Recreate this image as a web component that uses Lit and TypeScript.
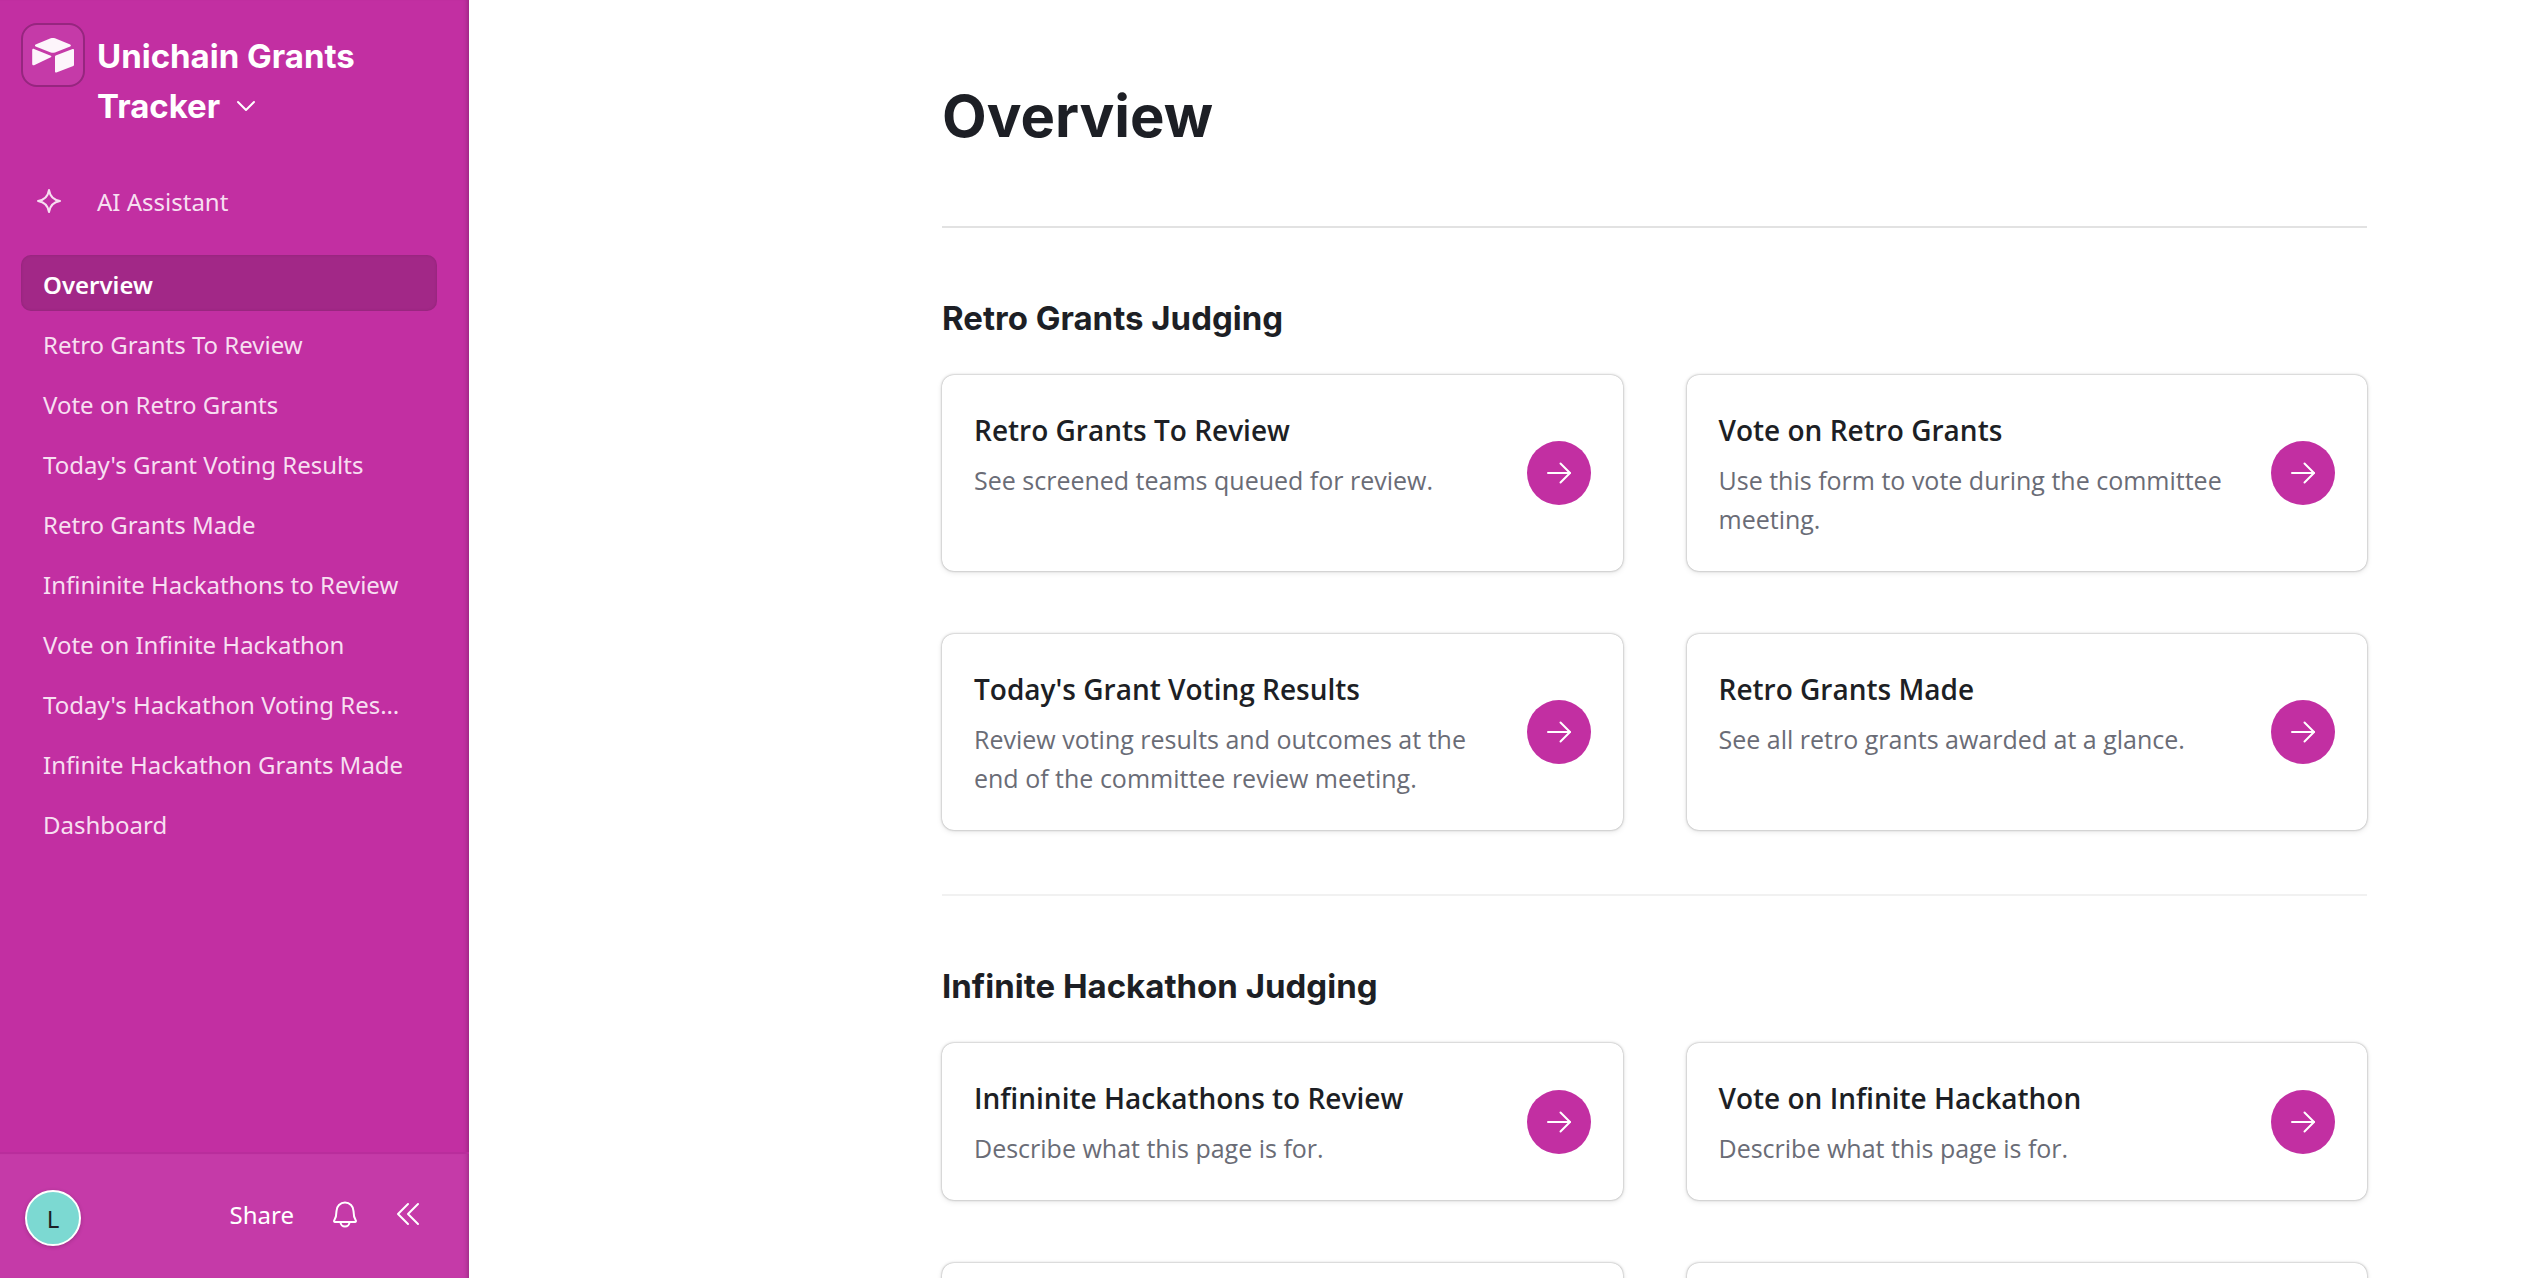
import { LitElement, html, css, svg } from "lit";
import { customElement, property, state } from "lit/decorators.js";
import { classMap } from "lit/directives/class-map.js";

interface PageCard {
  title: string;
  text: string;
}

interface Section {
  heading: string;
  cards: PageCard[];
}

const PAGES: string[] = [
  "Overview",
  "Retro Grants To Review",
  "Vote on Retro Grants",
  "Today's Grant Voting Results",
  "Retro Grants Made",
  "Infininite Hackathons to Review",
  "Vote on Infinite Hackathon",
  "Today's Hackathon Voting Results",
  "Infinite Hackathon Grants Made",
  "Dashboard",
];

const SECTIONS: Section[] = [
  {
    heading: "Retro Grants Judging",
    cards: [
      { title: "Retro Grants To Review", text: "See screened teams queued for review." },
      { title: "Vote on Retro Grants", text: "Use this form to vote during the committee meeting." },
      {
        title: "Today's Grant Voting Results",
        text: "Review voting results and outcomes at the end of the committee review meeting.",
      },
      { title: "Retro Grants Made", text: "See all retro grants awarded at a glance." },
    ],
  },
  {
    heading: "Infinite Hackathon Judging",
    cards: [
      { title: "Infininite Hackathons to Review", text: "Describe what this page is for." },
      { title: "Vote on Infinite Hackathon", text: "Describe what this page is for." },
      { title: "Today's Hackathon Voting Results", text: "Describe what this page is for." },
      { title: "Infinite Hackathon Grants Made", text: "Describe what this page is for." },
    ],
  },
];

const stroke = (width: number, height: number, body: unknown) => html`
  <svg
    width=${width}
    height=${height}
    viewBox="0 0 ${width} ${height}"
    fill="none"
    stroke="currentColor"
    stroke-width="2"
    stroke-linecap="round"
    stroke-linejoin="round"
    aria-hidden="true"
  >
    ${body}
  </svg>
`;

const chevronDown = stroke(20, 12, svg`<path d="M2 2l8 8 8-8" />`);
const sparkle = stroke(
  26,
  26,
  svg`<path d="M13 2c1 6.500 4.500 10 11 11c-6.500 1-10 4.500-11 11c-1-6.500-4.500-10-11-11c6.500-1 10-4.500 11-11z" />`
);
const bell = stroke(
  26,
  30,
  svg`<path d="M4.500 12a8.500 8.500 0 0 1 17 0c0 5 1 7.500 2.300 9.500c.400.800 0 1.500-.800 1.500h-20c-.800 0-1.200-.700-.800-1.500c1.300-2 2.300-4.500 2.300-9.500z" /><path d="M8.500 23a4.500 4.500 0 0 0 9 0" />`
);
const collapse = stroke(24, 24, svg`<path d="M12 2l-10 10 10 10" /><path d="M22 2l-10 10 10 10" />`);
const arrow = stroke(26, 26, svg`<path d="M2 13h22" /><path d="M14.500 3.500l9.500 9.500-9.500 9.500" />`);

const logo = html`
  <svg width="44" height="36" viewBox="0 0 44 36" fill="currentColor" aria-hidden="true">
    <path
      d="M19.700 1.300L4.600 7.500c-.900.400-.900 1.500 0 1.900l15.200 6c1.400.500 2.800.500 4.200 0l15.200-6c.900-.400.900-1.500 0-1.900L24 1.300c-1.400-.500-2.900-.500-4.300 0z"
    />
    <path d="M24 19.500v15c0 .700.700 1.200 1.400.900l16.900-6.500c.400-.200.700-.500.700-1v-15c0-.700-.700-1.200-1.400-.900l-16.900 6.500c-.400.200-.700.500-.700 1z" />
    <path d="M19.800 20.200L3.100 28.200c-.900.400-1.900-.200-1.900-1.100V13.100c0-.900.900-1.500 1.800-1.100l16.800 6.700c.700.300.7 1.200 0 1.500z" />
  </svg>
`;

@customElement("page-card")
class PageCardElement extends LitElement {
  @property() heading = "";
  @property() text = "";

  static styles = css`
    :host {
      display: block;
    }
    .card {
      box-sizing: border-box;
      display: flex;
      align-items: center;
      gap: 32px;
      height: 100%;
      padding: 32px;
      border-radius: 12px;
      background: #fff;
      box-shadow: 0 0 2px rgba(0, 0, 0, 0.36), 0 0 4px rgba(0, 0, 0, 0.08), 0 2px 6px rgba(0, 0, 0, 0.08);
      color: #1d1f25;
      text-decoration: none;
    }
    .words {
      flex: 1;
      min-width: 0;
      align-self: flex-start;
    }
    .title {
      margin: 0 0 8px;
      font-size: 28px;
      line-height: 46px;
      font-weight: 600;
    }
    .text {
      margin: 0;
      color: #6a6c76;
      font-size: 25px;
      line-height: 39px;
    }
    .go {
      display: flex;
      flex: none;
      align-items: center;
      justify-content: center;
      width: 64px;
      height: 64px;
      border-radius: 50%;
      background: #c22fa2;
      color: #fff;
    }
  `;

  render() {
    return html`
      <a class="card" href="#">
        <div class="words">
          <h3 class="title">${this.heading}</h3>
          <p class="text">${this.text}</p>
        </div>
        <span class="go">${arrow}</span>
      </a>
    `;
  }
}

@customElement("side-bar")
class SideBar extends LitElement {
  @state() private current = PAGES[0];

  static styles = css`
    :host {
      display: flex;
      flex-direction: column;
      flex: none;
      box-sizing: border-box;
      width: 469px;
      background: #c22fa2;
      box-shadow: inset -5px 0 5px -4px rgba(0, 0, 0, 0.25);
      color: #fff;
      font-family: "Noto Sans", "Open Sans", sans-serif;
    }
    button {
      margin: 0;
      padding: 0;
      border: 0;
      background: none;
      color: inherit;
      font: inherit;
      text-align: left;
      cursor: pointer;
    }
    svg {
      display: block;
      flex: none;
    }
    .brand {
      display: flex;
      gap: 12px;
      padding: 23px 32px 0 21px;
    }
    .mark {
      display: flex;
      flex: none;
      box-sizing: border-box;
      width: 64px;
      height: 64px;
      justify-content: center;
      padding-top: 12px;
      border: 2px solid #96267f;
      border-radius: 16px;
      background: #c53aa8;
      color: #fdf5fb;
    }
    .name {
      padding-top: 8px;
      font-family: Inter, "Liberation Sans", sans-serif;
      font-size: 33px;
      line-height: 50px;
      font-weight: 700;
    }
    .name svg {
      display: inline-block;
      margin: 0 0 6px 8px;
    }
    .assistant {
      display: flex;
      align-items: center;
      gap: 35px;
      margin: 42px 32px 26px 36px;
      height: 56px;
      color: #f7dff1;
    }
    .pages {
      display: flex;
      flex-direction: column;
      gap: 4px;
      margin: 0;
      padding: 0 32px 0 21px;
      list-style: none;
    }
    .page {
      display: block;
      overflow: hidden;
      padding: 3px 26px 0 22px;
      border-radius: 10px;
      color: #f7dff1;
      line-height: 53px;
      text-decoration: none;
      text-overflow: ellipsis;
      white-space: nowrap;
    }
    .page.current {
      background: #a22887;
      box-shadow: inset 0 0 3px rgba(0, 0, 0, 0.14);
      color: #fff;
      font-weight: 600;
    }
    .foot {
      display: flex;
      align-items: center;
      box-sizing: border-box;
      height: 126px;
      margin-top: auto;
      padding: 4px 49px 0 25px;
      border-top: 2px solid #b92d9c;
      background: #c53aa8;
      box-shadow: inset -5px 0 5px -4px rgba(0, 0, 0, 0.25);
    }
    .avatar {
      box-sizing: border-box;
      width: 56px;
      height: 56px;
      border: 2px solid #fff;
      border-radius: 50%;
      background: #7cd9d2;
      box-shadow: 0 1px 4px rgba(0, 0, 0, 0.2);
      color: #1d1f25;
      line-height: 54px;
      text-align: center;
    }
    .tools {
      display: flex;
      align-items: center;
      gap: 38px;
      margin: 0 0 8px auto;
    }
  `;

  render() {
    return html`
      <header class="brand">
        <span class="mark">${logo}</span>
        <button class="name">Unichain Grants Tracker${chevronDown}</button>
      </header>
      <button class="assistant">${sparkle}<span>AI Assistant</span></button>
      <nav>
        <ul class="pages">
          ${PAGES.map(
            (page) => html`
              <li>
                <a
                  class=${classMap({ page: true, current: page === this.current })}
                  href="#"
                  @click=${() => (this.current = page)}
                  >${page}</a
                >
              </li>
            `
          )}
        </ul>
      </nav>
      <footer class="foot">
        <button class="avatar" aria-label="Account">L</button>
        <div class="tools">
          <button>Share</button>
          <button aria-label="Notifications">${bell}</button>
          <button aria-label="Collapse sidebar">${collapse}</button>
        </div>
      </footer>
    `;
  }
}

@customElement("app-root")
class AppRoot extends LitElement {
  static styles = css`
    :host {
      display: flex;
      height: 100vh;
      overflow: hidden;
      background: #fff;
      color: #1d1f25;
      font-family: "Open Sans", "Noto Sans", sans-serif;
      font-size: 24px;
      line-height: 39px;
    }
    .main {
      display: grid;
      flex: 1;
      grid-template-columns: minmax(32px, 473fr) minmax(0, 1425fr) minmax(32px, 175fr);
      min-width: 0;
      overflow: auto;
      scrollbar-width: none;
    }
    .content {
      grid-column: 2;
      padding-bottom: 64px;
    }
    .heading,
    .subheading {
      margin: 0;
      font-family: Inter, "Liberation Sans", sans-serif;
      font-weight: 700;
    }
    .heading {
      padding: 76px 0 70px;
      font-size: 58px;
      line-height: 80px;
    }
    .section {
      padding: 66px 0 64px;
      border-top: 2px solid #f1f1f1;
    }
    .section:first-of-type {
      border-color: #e2e2e2;
    }
    .subheading {
      margin-bottom: 32px;
      font-size: 33px;
      line-height: 49px;
    }
    .cards {
      display: grid;
      grid-template-columns: repeat(2, minmax(0, 1fr));
      gap: 63px 64px;
    }
  `;

  render() {
    return html`
      <side-bar></side-bar>
      <main class="main">
        <div class="content">
          <h1 class="heading">Overview</h1>
          ${SECTIONS.map(
            (section) => html`
              <section class="section">
                <h2 class="subheading">${section.heading}</h2>
                <div class="cards">
                  ${section.cards.map(
                    (card) => html`<page-card .heading=${card.title} .text=${card.text}></page-card>`
                  )}
                </div>
              </section>
            `
          )}
        </div>
      </main>
    `;
  }
}
